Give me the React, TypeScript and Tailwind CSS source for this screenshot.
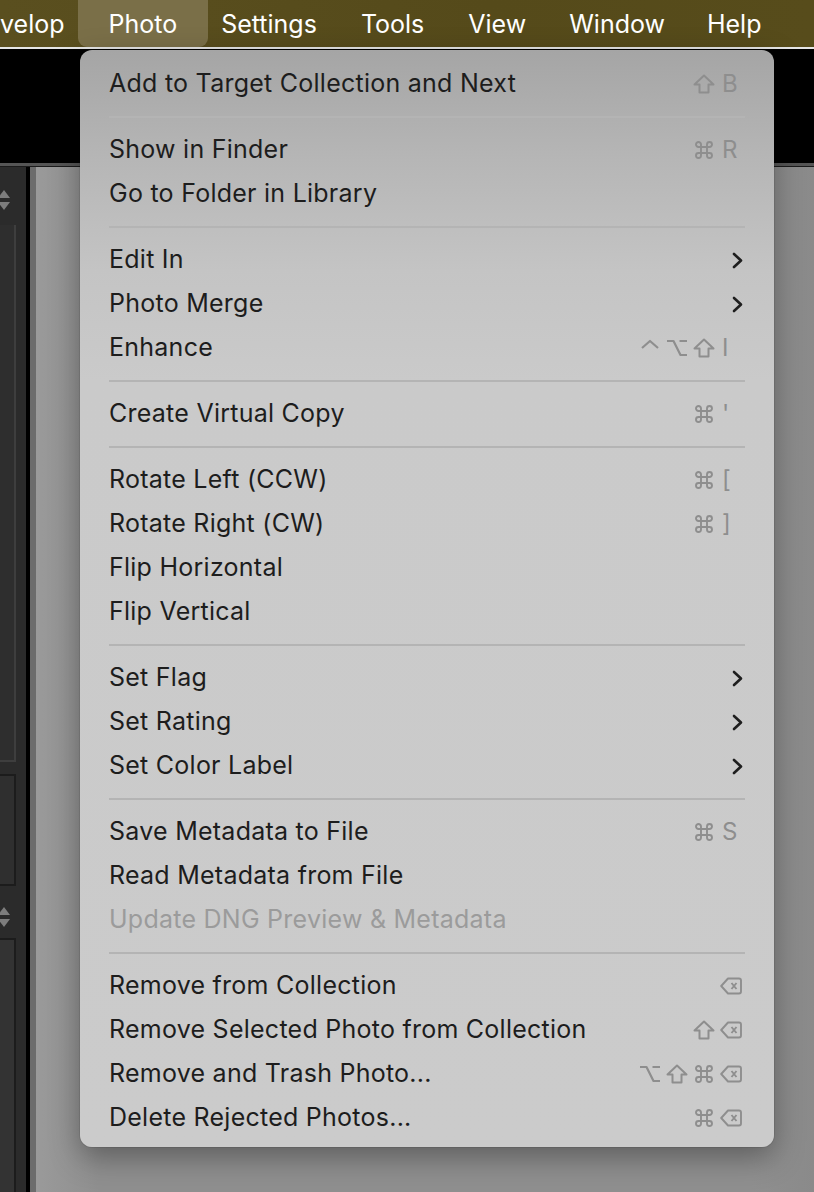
import React from "react";

const SC = "#8e8e8e";

function Shift() {
  return (
    <svg width="22" height="20" viewBox="0 0 22 20" fill="none" stroke={SC} strokeWidth="2" strokeLinejoin="round">
      <path d="M11 1.5 L20.5 10.5 H15.5 V18.5 H6.5 V10.5 H1.5 Z" />
    </svg>
  );
}
function Cmd() {
  return (
    <svg width="20" height="20" viewBox="0 0 20 20" fill="none" stroke={SC} strokeWidth="1.9">
      <path d="M7 7V4.5A2.5 2.5 0 1 0 4.5 7H15.5A2.5 2.5 0 1 0 13 4.5V15.5A2.5 2.5 0 1 0 15.5 13H4.5A2.5 2.5 0 1 0 7 15.5Z" />
    </svg>
  );
}
function Opt() {
  return (
    <svg width="22" height="20" viewBox="0 0 22 20" fill="none" stroke={SC} strokeWidth="2.2" strokeLinejoin="round">
      <path d="M1 3 H7.5 L14.5 17 H21 M13.5 3 H21" />
    </svg>
  );
}
function Ctrl() {
  return (
    <svg width="20" height="20" viewBox="0 0 20 20" fill="none" stroke={SC} strokeWidth="2.2" strokeLinejoin="round">
      <path d="M2 10 L10 3 L18 10" />
    </svg>
  );
}
function Del() {
  return (
    <svg width="22" height="18" viewBox="0 0 22 18" fill="none" stroke={SC} strokeWidth="1.9" strokeLinejoin="round">
      <path d="M8 1.5 H19 Q21 1.5 21 3.5 V14.5 Q21 16.5 19 16.5 H8 L1.2 9 Z" />
      <path d="M11.5 6 L16.5 12 M16.5 6 L11.5 12" />
    </svg>
  );
}
function Chevron() {
  return (
    <svg width="11" height="17" viewBox="0 0 11 17" fill="none" stroke="#1e1e1e" strokeWidth="2.6" strokeLinecap="round" strokeLinejoin="round">
      <path d="M2 2 L9 8.5 L2 15" />
    </svg>
  );
}

type Mod = "shift" | "cmd" | "opt" | "ctrl";
type Item = {
  label: string;
  mods?: Mod[];
  key?: string;
  del?: boolean;
  sub?: boolean;
  disabled?: boolean;
};

const modIcon = (m: Mod) =>
  m === "shift" ? <Shift /> : m === "cmd" ? <Cmd /> : m === "opt" ? <Opt /> : <Ctrl />;

const sections: Item[][] = [
  [{ label: "Add to Target Collection and Next", mods: ["shift"], key: "B" }],
  [
    { label: "Show in Finder", mods: ["cmd"], key: "R" },
    { label: "Go to Folder in Library" },
  ],
  [
    { label: "Edit In", sub: true },
    { label: "Photo Merge", sub: true },
    { label: "Enhance", mods: ["ctrl", "opt", "shift"], key: "I" },
  ],
  [{ label: "Create Virtual Copy", mods: ["cmd"], key: "'" }],
  [
    { label: "Rotate Left (CCW)", mods: ["cmd"], key: "[" },
    { label: "Rotate Right (CW)", mods: ["cmd"], key: "]" },
    { label: "Flip Horizontal" },
    { label: "Flip Vertical" },
  ],
  [
    { label: "Set Flag", sub: true },
    { label: "Set Rating", sub: true },
    { label: "Set Color Label", sub: true },
  ],
  [
    { label: "Save Metadata to File", mods: ["cmd"], key: "S" },
    { label: "Read Metadata from File" },
    { label: "Update DNG Preview & Metadata", disabled: true },
  ],
  [
    { label: "Remove from Collection", del: true },
    { label: "Remove Selected Photo from Collection", mods: ["shift"], del: true },
    { label: "Remove and Trash Photo...", mods: ["opt", "shift", "cmd"], del: true },
    { label: "Delete Rejected Photos...", mods: ["cmd"], del: true },
  ],
];

function Row({ item }: { item: Item }) {
  return (
    <div className="flex h-[44px] items-center pl-[29px] pr-[29px]">
      <span
        className={
          "flex-1 text-[25px] tracking-[0.25px] " +
          (item.disabled ? "text-[#9b9b9b]" : "text-[#1d1d1d]")
        }
      >
        {item.label}
      </span>
      {(item.mods || item.key || item.del || item.sub) && (
        <div className="flex items-center">
          <div className="flex items-center gap-[5px]">
            {(item.mods || []).map((m, i) => (
              <span key={i} className="flex h-[22px] w-[22px] items-center justify-center">
                {modIcon(m)}
              </span>
            ))}
          </div>
          <span className="ml-[5px] flex w-[25px] items-center">
            {item.key && <span className="text-[24px] leading-none text-[#8e8e8e] pl-[2px]">{item.key}</span>}
            {item.del && <Del />}
            {item.sub && (
              <span className="ml-auto mr-[2px] flex">
                <Chevron />
              </span>
            )}
          </span>
        </div>
      )}
    </div>
  );
}

function Sep() {
  return (
    <div className="flex h-[22px] items-center pl-[29px] pr-[29px]">
      <div className="h-[2px] w-full bg-[#b4b4b4]" />
    </div>
  );
}

function UpDown() {
  return (
    <svg width="12" height="26" viewBox="0 0 12 26" fill="#7d7d7d">
      <path d="M0 11 L6 3 L12 11 Z" />
      <path d="M0 15 L6 23 L12 15 Z" />
    </svg>
  );
}

export default function App() {
  return (
    <div
      className="relative h-[1192px] w-[814px] overflow-hidden bg-[#8e8e8e]"
      style={{ fontFamily: "Inter, 'Noto Sans', sans-serif" }}
    >
      {/* Menu bar */}
      <div className="flex h-[47px] items-center bg-[linear-gradient(90deg,#5a4f1f,#554a1a_60%,#574c1b)] pt-[2px] text-[25px] text-white">
        <span className="pr-[22px]">velop</span>
        <span className="mx-[-9px] mt-[-2px] flex h-[47px] items-center rounded-b-[9px] bg-[#7a6f48] px-[31px] pt-[2px]">Photo</span>
        <span className="px-[22px]">Settings</span>
        <span className="px-[22px]">Tools</span>
        <span className="px-[22px]">View</span>
        <span className="px-[21px]">Window</span>
        <span className="px-[21px]">Help</span>
      </div>
      <div className="h-[2px] bg-[#e6e6e6]" />
      <div className="h-[114px] bg-black" />
      <div className="h-[3px] bg-[#555555]" />
      <div className="h-[1px] bg-[#1a1a1a]" />

      {/* Body */}
      <div className="flex h-[1025px]">
        <div className="flex w-[26px] flex-col bg-[#2b2b2b]">
          <div className="ml-[-2px] mt-[20px]">
            <UpDown />
          </div>
          <div className="mt-[12px] h-[537px] w-[16px] border-r-2 border-b-2 border-[#3e3e3e] bg-[#2e2e2e]" />
          <div className="mt-[12px] h-[112px] w-[16px] border-y-2 border-r-2 border-[#1c1c1c] bg-[#2f2f2f]" />
          <div className="ml-[-2px] mt-[18px]">
            <UpDown />
          </div>
          <div className="mt-[8px] flex-1 w-[16px] border-t-2 border-r-2 border-[#1c1c1c] bg-[#333333]" />
        </div>
        <div className="w-[4px] bg-black" />
        <div className="w-[6px] bg-[#6c6c6c]" />
        <div className="flex-1 bg-[linear-gradient(90deg,#9a9a9a,#8f8f8f_8%,#8f8f8f_92%,#8a8a8a)]" />
      </div>

      {/* Dropdown menu */}
      <div className="absolute left-[80px] top-[50px] w-[694px] rounded-[12px] bg-[linear-gradient(180deg,#a5a5a5_0px,#b6b6b6_110px,#c4c4c4_220px,#cacaca_330px,#cbcbcb_100%)] pb-[7px] pt-[12px] shadow-[0_10px_30px_rgba(0,0,0,0.35),0_0_0_1px_rgba(0,0,0,0.08)]">
        {sections.map((sec, si) => (
          <React.Fragment key={si}>
            {si > 0 && <Sep />}
            {sec.map((it, ii) => (
              <Row key={ii} item={it} />
            ))}
          </React.Fragment>
        ))}
      </div>
    </div>
  );
}
